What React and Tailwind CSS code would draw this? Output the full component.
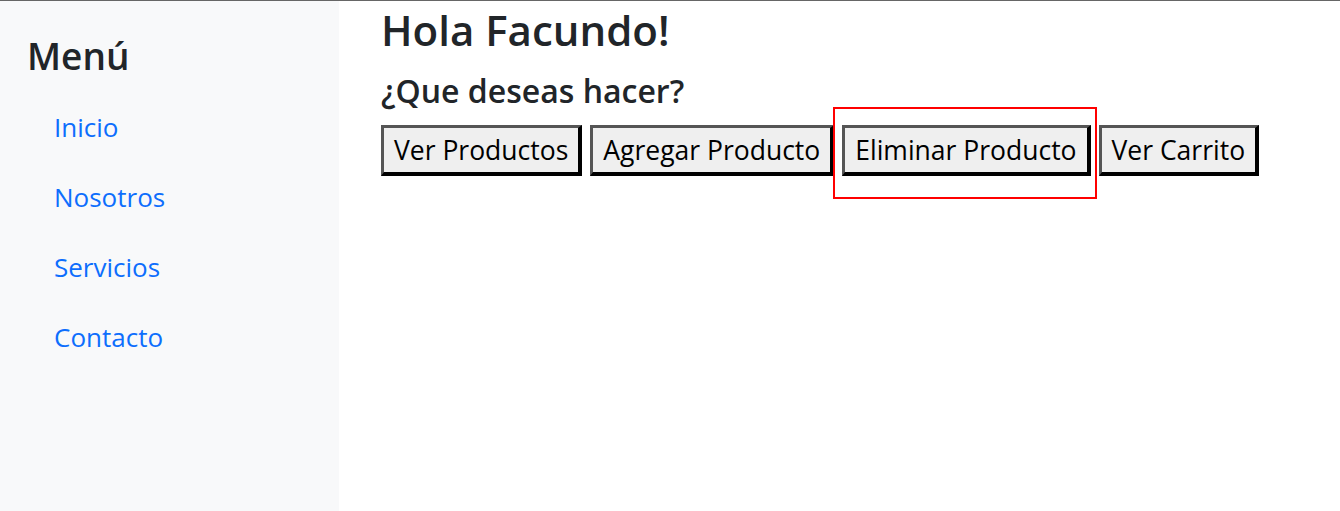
export default function App() {
  const btn =
    "bg-[#efefef] text-black text-[26.5px] leading-none h-[51px] px-[10px] border-t-[3px] border-l-[3px] border-b-[4px] border-r-[4px] border-t-[#555] border-l-[#555] border-b-black border-r-black";
  return (
    <div className="w-full h-[511px] flex border-t border-[#666] text-[#212529] font-['Open_Sans',sans-serif]">
      <aside className="w-[339px] shrink-0 bg-[#f8f9fa] pl-[27px] pt-[32px]">
        <h2 className="text-[37px] font-semibold leading-tight">Menú</h2>
        <nav className="flex flex-col mt-[24px] pl-[27px]">
          <a className="text-[#0d6efd] text-[26px] h-[70px] leading-[48px]">Inicio</a>
          <a className="text-[#0d6efd] text-[26px] h-[70px] leading-[48px]">Nosotros</a>
          <a className="text-[#0d6efd] text-[26px] h-[70px] leading-[48px]">Servicios</a>
          <a className="text-[#0d6efd] text-[26px] h-[70px] leading-[48px]">Contacto</a>
        </nav>
      </aside>
      <main className="flex-1 pl-[42px] relative">
        <h1 className="text-[42px] font-semibold leading-[58px]">Hola Facundo!</h1>
        <h3 className="text-[32px] font-semibold leading-[40px] mt-[12px]">¿Que deseas hacer?</h3>
        <div className="flex gap-[8px] mt-[14px]">
          <button className={btn}>Ver Productos</button>
          <button className={btn}>Agregar Producto</button>
          <button className={btn}>Eliminar Producto</button>
          <button className={btn}>Ver Carrito</button>
        </div>
        <div className="absolute left-[494px] top-[106px] w-[264px] h-[92px] border-2 border-[#ff0000] pointer-events-none"></div>
      </main>
    </div>
  );
}
